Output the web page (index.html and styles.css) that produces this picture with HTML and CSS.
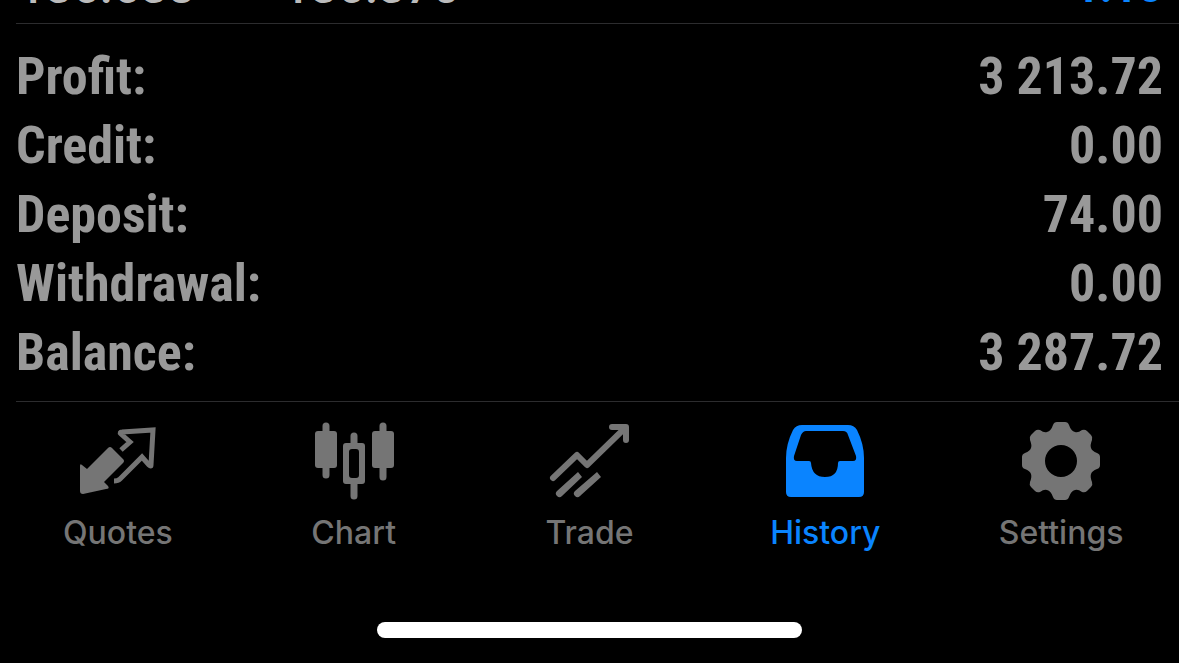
FILE: index.html
```html
<!DOCTYPE html>
<html lang="en">
<head>
    <meta charset="UTF-8">
    <meta name="viewport" content="width=device-width, initial-scale=1.0">
    <title>History</title>
    <link rel="stylesheet" href="styles.css">
</head>
<body>

    <main>
        <!-- Last deal, scrolled under the top edge -->
        <div class="deal">
            <div class="deal-prices">
                <span>136.638</span>
                <span>136.370</span>
            </div>
            <span class="deal-profit">1.10</span>
        </div>

        <!-- Account totals -->
        <dl class="summary">
            <div class="row"><dt>Profit:</dt><dd>3 213.72</dd></div>
            <div class="row"><dt>Credit:</dt><dd>0.00</dd></div>
            <div class="row"><dt>Deposit:</dt><dd>74.00</dd></div>
            <div class="row"><dt>Withdrawal:</dt><dd>0.00</dd></div>
            <div class="row"><dt>Balance:</dt><dd>3 287.72</dd></div>
        </dl>
    </main>

    <!-- Tab bar -->
    <nav class="tabs">
        <a href="#quotes" class="tab">
            <svg class="icon" viewBox="0 0 80 80" aria-hidden="true">
                <path class="solid" d="M34 27L45 38Q47 40 45 42L26 61L30 65Q32 68 28 68L5 73Q2 73 2 70L2 45Q2 42 4 44L9 48L30 27Q32 25 34 27Z"/>
                <path class="line-sharp" d="M43 29L52 21L43 13Q41 11 44 11L75 9L73 44Q73 46 71 44L64 36L42 58Q40 60 36 60"/>
            </svg>
            <span>Quotes</span>
        </a>
        <a href="#chart" class="tab">
            <svg class="icon" viewBox="0 0 80 80" aria-hidden="true">
                <path class="stick" d="M12 5V54M40 15V23M40 63V75M69 5V56"/>
                <rect class="solid" x="1" y="10" width="22" height="37" rx="3"/>
                <rect class="solid" x="58" y="10" width="22" height="37" rx="3"/>
                <path class="solid" fill-rule="evenodd" d="M32 22H48Q51 22 51 25V60Q51 63 48 63H32Q29 63 29 60V25Q29 22 32 22ZM38 28Q35 28 35 31V54Q35 57 38 57H42Q45 57 45 54V31Q45 28 42 28Z"/>
            </svg>
            <span>Chart</span>
        </a>
        <a href="#trade" class="tab">
            <svg class="icon" viewBox="0 0 80 80" aria-hidden="true">
                <path class="line" d="M4 57L28 34L38 44L76 7"/>
                <path class="line" d="M63 6H77V19"/>
                <path class="solid" d="M8 70L29 51L33 56L13 75A3 3 0 0 1 8 70ZM26 70L48 51L52 56L31 75A3 3 0 0 1 26 70Z"/>
            </svg>
            <span>Trade</span>
        </a>
        <a href="#history" class="tab active" aria-current="page">
            <svg class="icon" viewBox="0 0 80 80" aria-hidden="true">
                <path class="solid" fill-rule="evenodd" d="M17 4H63Q69 4 72 9Q79 23 79 37V71Q79 76 74 76H6Q1 76 1 71V37Q1 23 8 9Q11 4 17 4ZM21 10Q18 10 16 14L9 35Q8 40 12 40H24Q26 40 26 42Q27 56 40 56Q53 56 53 42Q53 40 55 40H68Q72 40 71 35L63 14Q62 10 58 10Z"/>
            </svg>
            <span>History</span>
        </a>
        <a href="#settings" class="tab">
            <svg class="icon" viewBox="0 0 80 80" aria-hidden="true">
                <path class="solid" fill-rule="evenodd" d="M36 1H44Q47 1 48 4Q50 10 54 11Q57 12 61 9Q64 8 66 10L70 14Q72 16 71 19Q69 24 70 27Q71 30 76 32Q79 33 79 36V44Q79 47 76 48Q71 50 70 53Q69 56 71 61Q72 64 70 66L66 70Q64 72 61 71Q57 68 54 69Q50 70 48 76Q47 79 44 79H36Q33 79 32 76Q30 70 26 69Q23 68 19 71Q16 72 14 70L10 66Q8 64 9 61Q11 56 10 53Q9 50 4 48Q1 47 1 44V36Q1 33 4 32Q9 30 10 27Q11 24 9 19Q8 16 10 14L14 10Q16 8 19 9Q23 12 26 11Q30 10 32 4Q33 1 36 1ZM40 24A16 16 0 1 0 40 56A16 16 0 1 0 40 24Z"/>
            </svg>
            <span>Settings</span>
        </a>
    </nav>

    <div class="home-bar"></div>

</body>
</html>
```
FILE: styles.css
```css
* {
    margin: 0;
    padding: 0;
    box-sizing: border-box;
}

body {
    min-height: 100vh;
    display: flex;
    flex-direction: column;
    overflow: hidden;
    background-color: #000;
    color: #999;
    font-family: "Roboto Condensed", Roboto, sans-serif;
}

/* Last deal */
.deal {
    display: flex;
    justify-content: space-between;
    align-items: flex-end;
    height: 24px;
    margin-left: 16px;
    padding-right: 16px;
    padding-bottom: 8px;
    border-bottom: 1px solid #2c2c2e;
    font-family: Roboto, sans-serif;
    font-size: 48px;
    font-weight: 500;
    line-height: 56px;
}

.deal-prices {
    display: flex;
    gap: 88px;
    padding-left: 2px;
    color: #bbb;
}

.deal-profit {
    color: #0a84ff;
    font-size: 44px;
    font-weight: bold;
}

/* Account totals */
.summary {
    margin-left: 16px;
    padding: 18px 16px 14px 0;
    border-bottom: 1px solid #2c2c2e;
    font-size: 52px;
    font-weight: bold;
    line-height: 69px;
}

.row {
    display: flex;
    justify-content: space-between;
}

/* Tab bar */
.tabs {
    display: flex;
    padding-top: 19px;
}

.tab {
    flex: 1;
    display: flex;
    flex-direction: column;
    align-items: center;
    gap: 12px;
    color: #757575;
    font-family: Inter, sans-serif;
    font-size: 32px;
    font-weight: 500;
    line-height: 40px;
    text-decoration: none;
}

.tab.active {
    color: #0a84ff;
}

.icon {
    width: 80px;
    height: 80px;
}

.solid {
    fill: currentColor;
}

.line,
.line-sharp,
.stick {
    fill: none;
    stroke: currentColor;
    stroke-width: 6;
    stroke-linecap: round;
    stroke-linejoin: round;
}

.line-sharp {
    stroke-width: 5;
    stroke-linecap: butt;
    stroke-linejoin: miter;
}

.stick {
    stroke-width: 7;
}

/* Home indicator */
.home-bar {
    width: 36%;
    height: 16px;
    margin: auto auto 25px;
    border-radius: 8px;
    background-color: #fff;
}
```
